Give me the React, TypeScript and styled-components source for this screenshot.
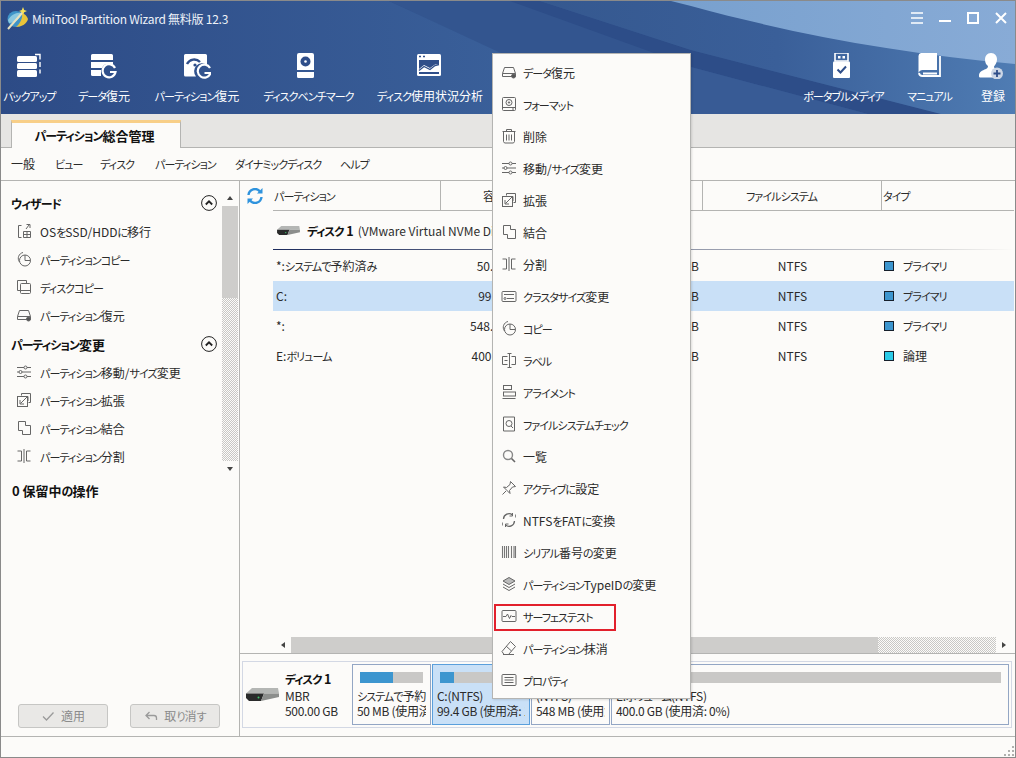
import React from "react";
import styled, { createGlobalStyle } from "styled-components";

const GlobalStyle = createGlobalStyle`
  html, body {
    margin: 0;
    padding: 0;
    background: #fcfbf9;
  }
  *, *::before, *::after {
    box-sizing: border-box;
  }
  body {
    font-family: "Noto Sans CJK JP", "Noto Sans", sans-serif;
    font-size: 12px;
    font-feature-settings: "palt";
    color: #2a2a2a;
  }
`;

const HEADER_BLUE = "#2f4e89";

// kana in the original UI font is much narrower than in Noto
const Kana = styled.span`
  font-size: 0.92em;
  letter-spacing: -0.085em;
`;

function Jp({ children }: { children: string }) {
  return (
    <>
      {children.split(/([\u3040-\u30ff]+)/).map((part, i) =>
        i % 2 === 1 ? <Kana key={i}>{part}</Kana> : part
      )}
    </>
  );
}

const Window = styled.div`
  position: relative;
  width: 1016px;
  height: 758px;
  border: 1px solid #8a8a8a;
  display: flex;
  flex-direction: column;
  background: #fcfbf9;
  overflow: hidden;
`;

/* header */
const Header = styled.header`
  position: relative;
  height: 113px;
  flex: none;
  background: ${HEADER_BLUE};
  color: #fff;
`;

const HeaderWaves = styled.svg`
  position: absolute;
  inset: 0;
  width: 100%;
  height: 100%;
`;

const TitleBar = styled.div`
  position: relative;
  height: 34px;
  display: flex;
  align-items: center;
  padding: 0 8px 0 5px;
  gap: 2px;
  font-size: 12px;
  letter-spacing: -0.25px;
  color: #eef2f8;
`;

const WindowButtons = styled.div`
  margin-left: auto;
  display: flex;
  gap: 16px;
`;

const Toolbar = styled.nav`
  position: relative;
  display: flex;
  padding: 18px 0 0 4px;
`;

const ToolGroup = styled.div`
  display: flex;
  gap: 24px;
`;

const ToolGroupRight = styled(ToolGroup)`
  margin-left: auto;
  padding-right: 4px;
  gap: 23px;
`;

const ToolItem = styled.div<{ $w: number }>`
  width: ${(p) => p.$w}px;
  display: flex;
  flex-direction: column;
  align-items: center;
  gap: 8px;
`;

const ToolLabel = styled.span`
  height: 17px;
  line-height: 17px;
  white-space: nowrap;
  font-size: 12px;
`;

/* tabs + menu */
const TabStrip = styled.div`
  height: 34px;
  flex: none;
  background: #e6e5e3;
  border-bottom: 1px solid #b4b4b2;
  display: flex;
  align-items: flex-end;
  padding-left: 10px;
`;

const Tab = styled.div`
  width: 170px;
  height: 28px;
  margin-bottom: -1px;
  padding: 0 3px 1px 0;
  background: #fcfbf9;
  border: 1px solid #b4b4b2;
  border-bottom: none;
  border-top: 3px solid #f8cf88;
  display: flex;
  align-items: center;
  justify-content: center;
  font-weight: 700;
  font-size: 13px;
  color: #111;
`;

const MenuBar = styled.div`
  height: 33px;
  flex: none;
  border-bottom: 1px solid #b4b4b2;
  display: flex;
  align-items: center;
  padding: 0 0 2px 10px;
  gap: 20px;
`;

const MenuLabel = styled.span<{ $w: number }>`
  width: ${(p) => p.$w}px;
  white-space: nowrap;
`;

/* main */
const Main = styled.div`
  flex: 1;
  display: flex;
  min-height: 0;
  border-bottom: 1px solid #b4b4b2;
`;

const LeftPanel = styled.aside`
  width: 239px;
  flex: none;
  border-right: 1px solid #b4b4b2;
  display: flex;
  flex-direction: column;
`;

const NavArea = styled.div`
  height: 296px;
  flex: none;
  display: flex;
`;

const NavList = styled.div`
  flex: 1;
  padding-top: 8px;
`;

const NavHeading = styled.div<{ $gap?: number }>`
  height: 28px;
  margin-top: ${(p) => p.$gap ?? 0}px;
  display: flex;
  align-items: center;
  justify-content: space-between;
  padding: 0 5px 0 10px;
  font-weight: 700;
  font-size: 13px;
  color: #111;
`;

const NavItem = styled.div`
  height: 28px;
  display: flex;
  align-items: center;
  gap: 8px;
  padding-left: 15px;
  white-space: nowrap;
`;

const VScroll = styled.div`
  width: 16px;
  margin: 9px 1px 0 0;
  display: flex;
  flex-direction: column;
`;

const ScrollArrow = styled.div<{ $dir: "up" | "down" | "left" | "right" }>`
  flex: none;
  width: 16px;
  height: 16px;
  display: flex;
  align-items: center;
  justify-content: center;
  &::before {
    content: "";
    border: 3px solid transparent;
    ${(p) =>
      p.$dir === "up"
        ? "border-bottom: 4px solid #444; border-top: none;"
        : p.$dir === "down"
          ? "border-top: 4px solid #444; border-bottom: none;"
          : p.$dir === "left"
            ? "border-right: 4px solid #444; border-left: none;"
            : "border-left: 4px solid #444; border-right: none;"}
  }
`;

const Thumb = styled.div<{ $size: number; $vertical?: boolean }>`
  flex: none;
  background: #cecdcb;
  ${(p) => (p.$vertical ? `height: ${p.$size}px;` : `width: ${p.$size}px;`)}
`;

const Hatch = styled.div`
  flex: 1;
  background: repeating-conic-gradient(#c8c7c5 0 25%, #fcfbf9 0 50%) 0 0 / 2px 2px;
`;

const Pending = styled.div`
  height: 28px;
  display: flex;
  align-items: center;
  padding: 0 0 2px 11px;
  font-weight: 700;
  font-size: 13px;
  color: #111;
`;

const FootBar = styled.div`
  margin-top: auto;
  margin-bottom: 8px;
  display: flex;
  gap: 22px;
  padding-left: 17px;
`;

const FootButton = styled.div`
  width: 90px;
  height: 24px;
  padding-bottom: 1px;
  background: #e9e8e6;
  border: 1px solid #c6c6c4;
  border-radius: 3px;
  display: flex;
  align-items: center;
  justify-content: center;
  gap: 6px;
  color: #8b8b8b;
`;

const RightPanel = styled.section`
  flex: 1;
  min-width: 0;
  display: flex;
  flex-direction: column;
`;

const TableArea = styled.div`
  flex: 1;
  display: flex;
  min-height: 0;
`;

const Gutter = styled.div`
  width: 33px;
  flex: none;
  padding: 7px 0 0 7px;
`;

const Table = styled.div`
  width: 741px;
`;

const columns = "168px 88px 87px 87px 179px 132px";

const HeaderRow = styled.div`
  height: 30px;
  display: grid;
  grid-template-columns: ${columns};
  border-bottom: 1px solid #b4b4b2;
`;

const HeadCell = styled.div<{ $center?: boolean; $pad?: number; $line?: boolean }>`
  display: flex;
  align-items: center;
  justify-content: ${(p) => (p.$center ? "center" : "flex-start")};
  padding-left: ${(p) => p.$pad ?? 1}px;
  padding-right: ${(p) => (p.$center ? 22 : 0)}px;
  border-right: ${(p) => (p.$line ? "1px solid #b4b4b2" : "none")};
`;

const DiskRow = styled.div`
  height: 39px;
  margin-bottom: 1px;
  display: flex;
  align-items: center;
  gap: 6px;
  padding: 0 0 1px 3px;
  white-space: nowrap;
  background: linear-gradient(to right, #1c2b5c, #d8d8d8 90%, #fcfbf9) left bottom / 100% 1px no-repeat;
`;

const DiskName = styled.span`
  color: #2f2f2f;
  b {
    color: #111;
    font-weight: 700;
    font-size: 12.5px;
    margin-right: 4px;
  }
`;

const Row = styled.div<{ $selected?: boolean }>`
  height: 30px;
  display: grid;
  grid-template-columns: ${columns};
  align-items: center;
  background: ${(p) => (p.$selected ? "#c9e0f7" : "transparent")};
`;

const Cell = styled.div<{ $align?: string; $pr?: number }>`
  text-align: ${(p) => p.$align ?? "left"};
  padding-left: ${(p) => (p.$align ? 0 : 3)}px;
  padding-right: ${(p) => p.$pr ?? 0}px;
  padding-bottom: 1px;
  white-space: nowrap;
`;

const TypeCell = styled.div`
  display: flex;
  align-items: center;
  gap: 9px;
  padding-left: 2px;
  padding-bottom: 1px;
`;

const Swatch = styled.span<{ $color: string }>`
  width: 10px;
  height: 10px;
  border: 1px solid #16202c;
  background: ${(p) => p.$color};
`;

const HScroll = styled.div`
  height: 17px;
  flex: none;
  display: flex;
  border-bottom: 1px solid #b4b4b2;
  padding: 0 3px 0 35px;
`;

const DiskMap = styled.div`
  height: 67px;
  flex: none;
  margin: 7px 3px 8px 2px;
  border: 1px solid #d3d8e4;
  padding: 2px;
  display: flex;
  gap: 1px;
`;

const DiskInfo = styled.div`
  width: 106px;
  flex: none;
  display: flex;
  align-items: center;
  gap: 6px;
  padding-left: 1px;
`;

const DiskText = styled.div`
  line-height: 15.5px;
  white-space: nowrap;
  padding-top: 1px;
  letter-spacing: -0.3px;
  b {
    display: block;
    font-size: 12.5px;
    color: #111;
  }
`;

const Block = styled.div<{ $w?: number; $selected?: boolean }>`
  ${(p) => (p.$w ? `width: ${p.$w}px; flex: none;` : "flex: 1;")}
  min-width: 0;
  border: 1px solid ${(p) => (p.$selected ? "#5a9fdc" : "#93a6c4")};
  background: ${(p) => (p.$selected ? "#c9e0f7" : "transparent")};
  padding: 7px 4px 0 4px;
  overflow: clip;
  overflow-clip-margin: content-box;
  white-space: nowrap;
  line-height: 14.5px;
  letter-spacing: -0.3px;
`;

const Bar = styled.div`
  height: 11px;
  margin: 0 3px 6px 3px;
  background: #c9c8c6;
`;

const BarFill = styled.div`
  height: 100%;
  background: #3d96cf;
`;

const StatusBar = styled.footer`
  height: 20px;
  flex: none;
  display: flex;
  justify-content: flex-end;
  align-items: flex-end;
`;

/* context menu */
const ContextMenu = styled.div`
  position: absolute;
  left: 491px;
  top: 52px;
  width: 199px;
  padding: 2px 0 2px;
  background: #fcfbf9;
  border: 1px solid #b4b4b2;
  box-shadow: 1px 1px 2px rgba(0, 0, 0, 0.12);
`;

const ContextItem = styled.div<{ $marked?: boolean }>`
  position: relative;
  height: 32px;
  display: flex;
  align-items: center;
  gap: 6px;
  padding-left: 8px;
  white-space: nowrap;
  ${(p) =>
    p.$marked
      ? `&::after {
          content: "";
          position: absolute;
          left: 1px;
          top: 4px;
          width: 122px;
          height: 27px;
          border: 2px solid #e2202c;
        }`
      : ""}
`;

const LineSvg = styled.svg`
  width: 16px;
  height: 16px;
  flex: none;
  fill: none;
  stroke: #666;
  stroke-width: 1;
`;

const lineIcons: Record<string, React.ReactNode> = {
  drive: (
    <>
      <path d="M1.5 9.5 3.5 3.5h9l2 6v3h-13z" />
      <path d="M1.5 9.5h13" />
      <circle cx="12.5" cy="12" r="2" fill="#555" />
    </>
  ),
  format: (
    <>
      <rect x="1.5" y="1.5" width="13" height="13" rx="1" />
      <circle cx="8" cy="6.5" r="3" />
      <circle cx="8" cy="6.5" r=".7" fill="#666" />
      <path d="M1.5 11.5h13M11 13h2" />
    </>
  ),
  trash: (
    <>
      <path d="M1.5 3.5h13M5.5 3V1.5h5V3" />
      <path d="M2.5 4v9.5l1 1.5h9l1-1.5V4" />
      <path d="M5.5 6.5v6M8 6.5v6M10.5 6.5v6" />
    </>
  ),
  sliders: (
    <>
      <path d="M1 3.5h7M11 3.5h4M1 8h2M6 8h9M1 12.5h7M11 12.5h4" />
      <circle cx="9.5" cy="3.5" r="1.5" />
      <circle cx="4.5" cy="8" r="1.5" />
      <circle cx="9.5" cy="12.5" r="1.5" />
    </>
  ),
  extend: (
    <>
      <path d="M5.5 3.5v-2h9v9h-2" />
      <rect x="1.5" y="4.5" width="10" height="10" />
      <path d="M4.5 11.5 11 5M7.5 4.5H12V9M4 8v4h4" />
    </>
  ),
  merge: <path d="M2.5 1.5h7v4h5v9h-8v-4h-4z" />,
  split: <path d="M8 1v14M5.5 3H1.5M5.5 3v10H1.5M10.5 13V3h4M10.5 13h4" />,
  cluster: (
    <>
      <rect x="1" y="3.5" width="14" height="10" rx="1" />
      <path d="M3 6.5h10M6 10.5h7" />
      <circle cx="4" cy="10.5" r="1" />
    </>
  ),
  copy: (
    <>
      <path d="M3.5 11A6 6 0 0 1 7 1.5" />
      <circle cx="9" cy="9.5" r="5.5" />
      <path d="M9 4v5.5h5.5" />
    </>
  ),
  label: (
    <>
      <path d="M6.5 4.5h-5v8h5M10.5 4.5h4v8h-4" />
      <path d="M8.5 2v13M6.5 1.5h4M6.5 15.5h4M3.5 8.5h3" />
    </>
  ),
  align: (
    <>
      <path d="M1.5 14.5h13" />
      <rect x="2.5" y="1.5" width="8" height="4" />
      <rect x="2.5" y="8" width="12" height="4" />
    </>
  ),
  check: (
    <>
      <path d="M2.5 1h11v14h-11z" />
      <circle cx="8" cy="7.5" r="3" />
      <path d="M10 10l2 2" />
    </>
  ),
  search: (
    <>
      <circle cx="7" cy="7" r="4.5" stroke="#888" strokeWidth="1.4" />
      <path d="M10.5 10.5l3.500 3.500" strokeWidth="1.6" />
    </>
  ),
  pin: (
    <>
      <path d="M9.5 1.5l5 5-3 .5-3 3.5.5 3-6.5-6.5 3 .5 3.5-3z" />
      <path d="M5 11l-3.5 3.5" />
    </>
  ),
  convert: (
    <>
      <path d="M2.5 7A5.5 5.5 0 0 1 11.5 3M13.5 9a5.5 5.5 0 0 1-9 4" strokeWidth="1.3" />
      <path d="M11.5 1v3h-3M4.5 15v-3h3" />
      <path d="M1.5 10.5v3M14.5 2.5v3" stroke="#888" />
    </>
  ),
  barcode: (
    <path d="M1.5 2v12M3.5 2v12M5.5 2v12M7.5 2v12M10.5 2v12M13 2v12M14.5 2v12" strokeWidth="1.1" stroke="#777" />
  ),
  layers: (
    <>
      <path d="M8 1.5l6 3.5-6 3.5L2 5z" fill="#bbb" />
      <path d="M2 8l6 3.5L14 8M2 11l6 3.5 6-3.5" />
    </>
  ),
  surface: (
    <>
      <rect x="1" y="2.5" width="14" height="11" rx="1" />
      <path d="M2 8.5h3l1.5-2.500 2 4.500L10 7.500l1 1h3" />
    </>
  ),
  wipe: (
    <>
      <path d="M9.5 1.5l5 5-7 8H3l-2-3z" />
      <path d="M5 6l5.5 5M2 14.5h11" />
    </>
  ),
  props: (
    <>
      <rect x="1" y="2.5" width="14" height="11" rx="1" />
      <path d="M3.5 5.5h9M3.5 8h9M3.5 10.5h9" />
    </>
  ),
  migrate: (
    <>
      <path d="M5.5 2.5h-3v12h3" />
      <path d="M7.5 8.5h7v6h-7zM7.5 11.5h7M11 8.5v6" />
      <path d="M10 6l3-4M10.5 1.5H14V5" />
    </>
  ),
  diskcopy: (
    <>
      <path d="M4.5 11.5h-3v-10h9v3" />
      <rect x="4.5" y="4.5" width="10" height="10" rx="1" />
      <path d="M4.5 11.5h10" />
    </>
  ),
};

function LineIcon({ name }: { name: string }) {
  return <LineSvg viewBox="0 0 16 16">{lineIcons[name]}</LineSvg>;
}

function Logo() {
  return (
    <svg width="24" height="24" viewBox="0 0 24 24">
      <ellipse cx="10" cy="13" rx="8.5" ry="8" fill="#3f94c8" />
      <path d="M2 14c3-5 8-8 14-7-2 6-7 10-13 10z" fill="#8cc8e0" />
      <path d="M10 21c5 0 11-3 12-8-1-3-3-5-6-6 1 5-2 11-6 14z" fill="#e9c43a" />
      <path d="M2 23 17 6" stroke="#e8e2c0" strokeWidth="2" />
      <path d="M17 1l1.2 3L21 5l-2.8 1.2L17 9l-1.2-2.8L13 5l2.8-1z" fill="#f6e05a" />
    </svg>
  );
}

function WindowGlyph({ kind }: { kind: "menu" | "min" | "max" | "close" }) {
  return (
    <svg width="12" height="12" viewBox="0 0 12 12" stroke="#fff" strokeWidth="2" fill="none">
      {kind === "menu" && <path d="M0 1h12M0 6h12M0 11h12" strokeWidth="1.6" />}
      {kind === "min" && <path d="M0 9h12" />}
      {kind === "max" && <rect x="1" y="1" width="10" height="10" />}
      {kind === "close" && <path d="M1 1l10 10M11 1 1 11" />}
    </svg>
  );
}

const toolIcons: Record<string, React.ReactNode> = {
  backup: (
    <>
      <rect x="1" y="3" width="20" height="6" rx="1.5" fill="#fff" />
      <rect x="1" y="10" width="20" height="6" rx="1.5" fill="#fff" />
      <rect x="1" y="17" width="20" height="7" rx="1.5" fill="#fff" />
      <path d="M19 1.5h5v5M24 9v5M24 16.5v4" stroke="#fff" strokeWidth="1.4" fill="none" />
    </>
  ),
  recover: (
    <>
      <path d="M1 2.5a1.5 1.5 0 0 1 1.5-1.5h19a1.5 1.5 0 0 1 1.5 1.5V7H1z" fill="#fff" />
      <path d="M1 9h22v2.5h-8a8 8 0 0 0-3 3.5H1z" fill="#fff" />
      <path d="M1 17h10v6H2.5A1.5 1.5 0 0 1 1 21.5z" fill="#fff" />
      <path d="M25 15a6.5 6.5 0 1 0 .5 4H20" stroke="#fff" strokeWidth="2.2" fill="none" />
    </>
  ),
  partition: (
    <>
      <path d="M1 2.5A1.5 1.5 0 0 1 2.5 1h20A1.5 1.5 0 0 1 24 2.5V12a8 8 0 0 0-11 11.5H2.5A1.5 1.5 0 0 1 1 22z" fill="#fff" />
      <path d="M4 11a8 8 0 0 1 13-2" stroke={HEADER_BLUE} strokeWidth="2.4" fill="none" />
      <circle cx="12" cy="12" r="1.6" fill={HEADER_BLUE} />
      <path d="M27 15a6.5 6.5 0 1 0 .5 5H21.5" stroke="#fff" strokeWidth="2.2" fill="none" />
    </>
  ),
  benchmark: (
    <>
      <path d="M4 0h13a2 2 0 0 1 2 2v15H2V2a2 2 0 0 1 2-2z" fill="#fff" />
      <circle cx="10.5" cy="8.5" r="5" fill={HEADER_BLUE} />
      <circle cx="10.5" cy="8.5" r="1.3" fill="#fff" />
      <path d="M2 19h17v4.5a1.5 1.5 0 0 1-1.5 1.5h-14A1.5 1.5 0 0 1 2 23.5z" fill="#fff" />
    </>
  ),
  usage: (
    <>
      <rect x="1" y="1" width="24" height="22" rx="1.5" fill="#fff" />
      <rect x="3" y="7" width="20" height="14" fill={HEADER_BLUE} />
      <path d="M3 3.5h2M7 3.5h2" stroke={HEADER_BLUE} strokeWidth="1.5" />
      <path d="M3 19V16l5-4 6 3 5-3.5 4-.5v8z" fill="#fff" />
      <path d="M3 17.5l5-4 6 3 5-4 4-1" stroke={HEADER_BLUE} strokeWidth="1.3" fill="none" />
    </>
  ),
  usb: (
    <>
      <path d="M5 0h13v8H5z" fill="none" stroke="#fff" strokeWidth="1.6" />
      <path d="M8 3h2.5v2.5H8zM12.5 3H15v2.5h-2.5z" fill="#fff" />
      <path d="M4 8.5h15a1 1 0 0 1 1 1V24a1 1 0 0 1-1 1H4a1 1 0 0 1-1-1V9.5a1 1 0 0 1 1-1z" fill="#fff" />
      <path d="M7.5 16.5l3 3 5.5-6" stroke={HEADER_BLUE} strokeWidth="2" fill="none" />
    </>
  ),
  book: (
    <>
      <path d="M5 0h16v17H7a4.5 4.5 0 0 0-4.5 3V3A3 3 0 0 1 5 0z" fill="#fff" />
      <path d="M24 3v20H6.5a3.5 3.5 0 0 1-3.5-3" stroke="#fff" strokeWidth="1.8" fill="none" />
      <path d="M7 19.5h14v2H7z" fill="#fff" />
    </>
  ),
  user: (
    <>
      <path d="M12 0c4 0 6 3 6 6.5S16 12 15 13.5c0 1.5 1 2.5 3 3a7.5 7.5 0 0 0-3 8H1c-1 0-1-1-1-2 0-3.5 3-5 7-6.5 1-.5 2-1.500 2-3C7.500 12 6 10 6 6.500S8 0 12 0z" fill="#fff" />
      <circle cx="18" cy="20.500" r="6" fill="#cdd7e6" />
      <path d="M18 17v7M14.500 20.500h7" stroke={HEADER_BLUE} strokeWidth="1.800" />
    </>
  ),
};

function ToolIcon({ name }: { name: string }) {
  return (
    <svg width="28" height="26" viewBox="0 0 28 26">
      {toolIcons[name]}
    </svg>
  );
}

function DriveImage({ small }: { small?: boolean }) {
  const w = small ? 25 : 33;
  return (
    <svg width={w} height={small ? 9 : 13} viewBox="0 0 33 13" style={{ flex: "none" }}>
      <path d="M6 0h26l1 5.500H0z" fill="#b4b6b4" />
      <path d="M0 5.500h18L15 13H3l-3-3z" fill="#2a2b2b" />
      <path d="M18 5.500h15V9l-18 4z" fill="#8c8e8c" />
      <circle cx="12.500" cy="9.500" r="1" fill="#3fc46a" />
    </svg>
  );
}

const menuItems: [string, string][] = [
  ["drive", "データ復元"],
  ["format", "フォーマット"],
  ["trash", "削除"],
  ["sliders", "移動/サイズ変更"],
  ["extend", "拡張"],
  ["merge", "結合"],
  ["split", "分割"],
  ["cluster", "クラスタサイズ変更"],
  ["copy", "コピー"],
  ["label", "ラベル"],
  ["align", "アライメント"],
  ["check", "ファイルシステムチェック"],
  ["search", "一覧"],
  ["pin", "アクティブに設定"],
  ["convert", "NTFSをFATに変換"],
  ["barcode", "シリアル番号の変更"],
  ["layers", "パーティションTypeIDの変更"],
  ["surface", "サーフェステスト"],
  ["wipe", "パーティション抹消"],
  ["props", "プロパティ"],
];

const rows = [
  { name: "*:システムで予約済み", cap: "50.00 MB", type: "プライマリ", color: "#3d96cf" },
  { name: "C:", cap: "99.40 GB", type: "プライマリ", color: "#3d96cf", selected: true },
  { name: "*:", cap: "548.00 MB", type: "プライマリ", color: "#3d96cf" },
  { name: "E:ボリューム", cap: "400.00 GB", type: "論理", color: "#2bcbe8" },
];

const navWizard: [string, string][] = [
  ["migrate", "OSをSSD/HDDに移行"],
  ["copy", "パーティションコピー"],
  ["diskcopy", "ディスクコピー"],
  ["drive", "パーティション復元"],
];

const navChange: [string, string][] = [
  ["sliders", "パーティション移動/サイズ変更"],
  ["extend", "パーティション拡張"],
  ["merge", "パーティション結合"],
  ["split", "パーティション分割"],
];

const tools: [string, string, number][] = [
  ["backup", "バックアップ", 49],
  ["recover", "データ復元", 52],
  ["partition", "パーティション復元", 86],
  ["benchmark", "ディスクベンチマーク", 89],
  ["usage", "ディスク使用状況分析", 106],
];

const toolsRight: [string, string, number][] = [
  ["usb", "ポータブルメディア", 81],
  ["book", "マニュアル", 45],
  ["user", "登録", 36],
];

const menus: [string, number][] = [
  ["一般", 24],
  ["ビュー", 25],
  ["ディスク", 35],
  ["パーティション", 60],
  ["ダイナミックディスク", 85],
  ["ヘルプ", 28],
];

function ChevronCircle() {
  return (
    <svg width="16" height="16" viewBox="0 0 16 16" fill="none" stroke="#222">
      <circle cx="8" cy="8" r="7.4" />
      <path d="M4.8 9.5 8 6.3l3.2 3.2" strokeWidth="1.8" />
    </svg>
  );
}

export default function App() {
  return (
    <>
      <GlobalStyle />
      <Window>
        <Header>
          <HeaderWaves viewBox="0 0 1014 113" preserveAspectRatio="none">
            <defs>
              <linearGradient id="base" x1="0" x2="1" y1="0" y2="0">
                <stop offset="0" stopColor="#2d4b86" />
                <stop offset="1" stopColor="#3a609a" />
              </linearGradient>
              <linearGradient id="upper" x1="0" x2="1" y1="0" y2="0">
                <stop offset="0" stopColor="#35588f" />
                <stop offset="0.5" stopColor="#3a5f99" />
                <stop offset="1" stopColor="#4f7cb3" />
              </linearGradient>
              <linearGradient id="light" x1="0" x2="1" y1="0" y2="0">
                <stop offset="0" stopColor="#78a0ce" />
                <stop offset="1" stopColor="#88abd6" />
              </linearGradient>
            </defs>
            <path d="M0 0H388L500 50 520 113H0z" fill="url(#base)" />
            <path d="M388 0 560 80 700 113H1014V0z" fill="#33558f" />
            <path d="M509 0 653 52 690 66 867 113H940L690 49 539 0z" fill="#2d4d88" />
            <path d="M539 0 690 49 940 113H1014V0z" fill="url(#upper)" />
            <path d="M653 52 690 66 867 113H600z" fill="#385b95" />
            <path d="M670 0 690 5C800 35 900 52 1014 63V0z" fill="url(#light)" />
          </HeaderWaves>
          <TitleBar>
            <Logo />
            <span>MiniTool Partition Wizard 無料版 12.3</span>
            <WindowButtons>
              <WindowGlyph kind="menu" />
              <WindowGlyph kind="min" />
              <WindowGlyph kind="max" />
              <WindowGlyph kind="close" />
            </WindowButtons>
          </TitleBar>
          <Toolbar>
            <ToolGroup>
              {tools.map(([icon, label, w]) => (
                <ToolItem key={label} $w={w}>
                  <ToolIcon name={icon} />
                  <ToolLabel>
                    <Jp>{label}</Jp>
                  </ToolLabel>
                </ToolItem>
              ))}
            </ToolGroup>
            <ToolGroupRight>
              {toolsRight.map(([icon, label, w]) => (
                <ToolItem key={label} $w={w}>
                  <ToolIcon name={icon} />
                  <ToolLabel>
                    <Jp>{label}</Jp>
                  </ToolLabel>
                </ToolItem>
              ))}
            </ToolGroupRight>
          </Toolbar>
        </Header>

        <TabStrip>
          <Tab>
            <span>
              <Jp>パーティション総合管理</Jp>
            </span>
          </Tab>
        </TabStrip>

        <MenuBar>
          {menus.map(([label, w]) => (
            <MenuLabel key={label} $w={w}>
              <Jp>{label}</Jp>
            </MenuLabel>
          ))}
        </MenuBar>

        <Main>
          <LeftPanel>
            <NavArea>
              <NavList>
                <NavHeading>
                  <span>
                    <Jp>ウィザード</Jp>
                  </span>
                  <ChevronCircle />
                </NavHeading>
                {navWizard.map(([icon, label]) => (
                  <NavItem key={label}>
                    <LineIcon name={icon} />
                    <span>
                      <Jp>{label}</Jp>
                    </span>
                  </NavItem>
                ))}
                <NavHeading $gap={1}>
                  <span>
                    <Jp>パーティション変更</Jp>
                  </span>
                  <ChevronCircle />
                </NavHeading>
                {navChange.map(([icon, label]) => (
                  <NavItem key={label}>
                    <LineIcon name={icon} />
                    <span>
                      <Jp>{label}</Jp>
                    </span>
                  </NavItem>
                ))}
              </NavList>
              <VScroll>
                <ScrollArrow $dir="up" />
                <Thumb $size={92} $vertical />
                <Hatch />
                <ScrollArrow $dir="down" />
              </VScroll>
            </NavArea>
            <Pending>
              <span>
                <Jp>0 保留中の操作</Jp>
              </span>
            </Pending>
            <FootBar>
              <FootButton>
                <svg width="14" height="14" viewBox="0 0 14 14" fill="none" stroke="#9a9a9a" strokeWidth="1.3">
                  <path d="M2 7.5l3.5 3.5L12.5 3.5" />
                </svg>
                適用
              </FootButton>
              <FootButton>
                <svg width="14" height="14" viewBox="0 0 14 14" fill="none" stroke="#9a9a9a" strokeWidth="1.3">
                  <path d="M5.5 3 2 6.5 5.5 10M2 6.5h8a2.5 2.5 0 0 1 2.5 2.5v2" />
                </svg>
                <span>
                  <Jp>取り消す</Jp>
                </span>
              </FootButton>
            </FootBar>
          </LeftPanel>

          <RightPanel>
            <TableArea>
              <Gutter>
                <svg width="16" height="16" viewBox="0 0 16 16" fill="none" stroke="#2f93dd" strokeWidth="2.4">
                  <path d="M1.5 7A6.5 6.5 0 0 1 13 3.5" />
                  <path d="M14.5 9A6.5 6.5 0 0 1 3 12.5" />
                  <path d="M15.5 0v5.5H10z" fill="#2f93dd" stroke="none" />
                  <path d="M.5 16v-5.5H6z" fill="#2f93dd" stroke="none" />
                </svg>
              </Gutter>
              <Table>
                <HeaderRow>
                  <HeadCell $line>
                    <span>
                      <Jp>パーティション</Jp>
                    </span>
                  </HeadCell>
                  <HeadCell $pad={42}>容量</HeadCell>
                  <HeadCell>
                    <span>
                      <Jp>使用済み</Jp>
                    </span>
                  </HeadCell>
                  <HeadCell $line>
                    <span>未使用</span>
                  </HeadCell>
                  <HeadCell $center $line>
                    <span>
                      <Jp>ファイルシステム</Jp>
                    </span>
                  </HeadCell>
                  <HeadCell>
                    <span>
                      <Jp>タイプ</Jp>
                    </span>
                  </HeadCell>
                </HeaderRow>
                <DiskRow>
                  <DriveImage small />
                  <DiskName>
                    <b>
                      <Jp>ディスク 1</Jp>
                    </b>
                    (VMware Virtual NVMe Disk, MBR, 500.00 GB)
                  </DiskName>
                </DiskRow>
                {rows.map((r) => (
                  <Row key={r.name} $selected={r.selected}>
                    <Cell>
                      <Jp>{r.name}</Jp>
                    </Cell>
                    <Cell $align="right" $pr={2}>
                      {r.cap}
                    </Cell>
                    <Cell />
                    <Cell $align="right" $pr={4}>
                      0.00 GB
                    </Cell>
                    <Cell $align="center">NTFS</Cell>
                    <TypeCell>
                      <Swatch $color={r.color} />
                      <span>
                        <Jp>{r.type}</Jp>
                      </span>
                    </TypeCell>
                  </Row>
                ))}
              </Table>
            </TableArea>

            <HScroll>
              <ScrollArrow $dir="left" />
              <Thumb $size={587} />
              <Hatch />
              <ScrollArrow $dir="right" />
            </HScroll>

            <DiskMap>
              <DiskInfo>
                <DriveImage />
                <DiskText>
                  <b>
                    <Jp>ディスク 1</Jp>
                  </b>
                  MBR
                  <br />
                  500.00 GB
                </DiskText>
              </DiskInfo>
              <Block $w={79}>
                <Bar>
                  <BarFill style={{ width: "52%" }} />
                </Bar>
                <Jp>システムで予約済み</Jp>
                <br />
                <Jp>50 MB (使用済: 52%)</Jp>
              </Block>
              <Block $w={98} $selected>
                <Bar>
                  <BarFill style={{ width: "17%" }} />
                </Bar>
                C:(NTFS)
                <br />
                99.4 GB (使用済: 17%)
              </Block>
              <Block $w={79}>
                <Bar>
                  <BarFill style={{ width: "80%" }} />
                </Bar>
                (NTFS)
                <br />
                548 MB (使用済: 80%)
              </Block>
              <Block>
                <Bar />
                <Jp>E:ボリューム(NTFS)</Jp>
                <br />
                400.0 GB (使用済: 0%)
              </Block>
            </DiskMap>
          </RightPanel>
        </Main>

        <StatusBar>
          <svg width="12" height="12" viewBox="0 0 12 12" fill="#b0b0ae">
            <path d="M9 1h2v2H9zM5 5h2v2H5zM9 5h2v2H9zM1 9h2v2H1zM5 9h2v2H5zM9 9h2v2H9z" />
          </svg>
        </StatusBar>

        <ContextMenu>
          {menuItems.map(([icon, label]) => (
            <ContextItem key={label} $marked={icon === "surface"}>
              <LineIcon name={icon} />
              <span>
                <Jp>{label}</Jp>
              </span>
            </ContextItem>
          ))}
        </ContextMenu>
      </Window>
    </>
  );
}
